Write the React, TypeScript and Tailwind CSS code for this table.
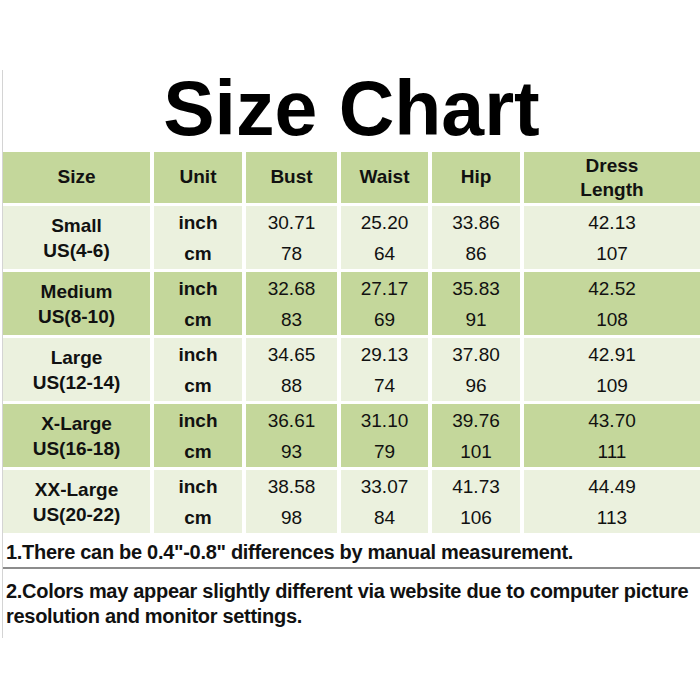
const ROWS = [
  { name: 'Small', us: 'US(4-6)', inch: ['30.71', '25.20', '33.86', '42.13'], cm: ['78', '64', '86', '107'], dark: false },
  { name: 'Medium', us: 'US(8-10)', inch: ['32.68', '27.17', '35.83', '42.52'], cm: ['83', '69', '91', '108'], dark: true },
  { name: 'Large', us: 'US(12-14)', inch: ['34.65', '29.13', '37.80', '42.91'], cm: ['88', '74', '96', '109'], dark: false },
  { name: 'X-Large', us: 'US(16-18)', inch: ['36.61', '31.10', '39.76', '43.70'], cm: ['93', '79', '101', '111'], dark: true },
  { name: 'XX-Large', us: 'US(20-22)', inch: ['38.58', '33.07', '41.73', '44.49'], cm: ['98', '84', '106', '113'], dark: false },
];

const HEADERS = ['Size', 'Unit', 'Bust', 'Waist', 'Hip'];

export default function App() {
  return (
    <div className="h-[700px] w-[700px] overflow-hidden bg-white pl-[2px] pt-[65px] font-['Liberation_Sans',Arial,sans-serif] text-[#111]">
      <div className="h-[568px] border-l border-[#d4d4d4]">
        <h1 className="mt-[5px] h-[78px] text-center text-[77px] font-bold leading-[77px] text-black">
          Size Chart
        </h1>

        <div className="mt-[4px] grid grid-cols-[147px_88px_91px_87px_88px_1fr] gap-x-[4px] gap-y-[3px]">
          {HEADERS.map((h) => (
            <div
              key={h}
              className="flex h-[51px] items-center justify-center bg-[#c4d79b] text-[19px] font-bold"
            >
              {h}
            </div>
          ))}
          <div className="flex h-[51px] flex-col items-center justify-center bg-[#c4d79b] text-[19px] font-bold leading-[24px]">
            <span>Dress</span>
            <span>Length</span>
          </div>

          {ROWS.map((r) => {
            const bg = r.dark ? 'bg-[#c4d79b]' : 'bg-[#ebf1de]';
            return (
              <div key={r.name} className="contents">
                <div className={`flex h-[63px] flex-col items-center justify-center text-[19px] font-bold leading-[25px] ${bg}`}>
                  <span>{r.name}</span>
                  <span>{r.us}</span>
                </div>
                <div className={`flex h-[63px] flex-col items-center justify-center text-[19px] font-bold leading-[31px] ${bg}`}>
                  <span>inch</span>
                  <span>cm</span>
                </div>
                {r.inch.map((v, i) => (
                  <div
                    key={i}
                    className={`flex h-[63px] flex-col items-center justify-center text-[19px] leading-[31px] ${bg}`}
                  >
                    <span>{v}</span>
                    <span>{r.cm[i]}</span>
                  </div>
                ))}
              </div>
            );
          })}
        </div>

        <div className="text-[20px] font-bold tracking-[-0.3px]">
          <p className="h-[34px] pl-[3px] pt-[2px] leading-[34px]">
            1.There can be 0.4"-0.8" differences by manual measurement.
          </p>
          <div className="border-t-2 border-[#8c8c8c] pl-[3px] pt-[10px] leading-[25px]">
            <p>2.Colors may appear slightly different via website due to computer picture</p>
            <p>resolution and monitor settings.</p>
          </div>
        </div>
      </div>
    </div>
  );
}
